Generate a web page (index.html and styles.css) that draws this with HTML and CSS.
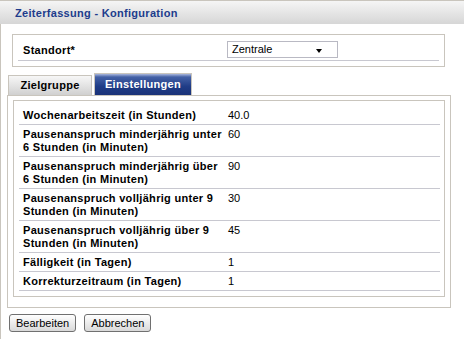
FILE: index.html
```html
<!DOCTYPE html>
<html lang="de">
<head>
  <meta charset="UTF-8" />
  <title>Zeiterfassung - Konfiguration</title>
  <link rel="stylesheet" href="styles.css">
</head>
<body>
  <div class="page">
    <div class="header">
      <h1>Zeiterfassung - Konfiguration</h1>
    </div>
    <div class="content">
      <div class="standort-box">
        <div class="standort-row">
          <label>Standort*</label>
          <div class="select">Zentrale<span class="arrow"></span></div>
        </div>
      </div>

      <div class="tabs">
        <div class="tab">Zielgruppe</div>
        <div class="tab active">Einstellungen</div>
      </div>

      <div class="panel">
        <div class="panel-inner">
          <div class="row">
            <div class="label">Wochenarbeitszeit (in Stunden)</div>
            <div class="value">40.0</div>
          </div>
          <div class="row">
            <div class="label">Pausenanspruch minderjährig unter 6 Stunden (in Minuten)</div>
            <div class="value">60</div>
          </div>
          <div class="row">
            <div class="label">Pausenanspruch minderjährig über 6 Stunden (in Minuten)</div>
            <div class="value">90</div>
          </div>
          <div class="row">
            <div class="label">Pausenanspruch volljährig unter 9 Stunden (in Minuten)</div>
            <div class="value">30</div>
          </div>
          <div class="row">
            <div class="label">Pausenanspruch volljährig über 9 Stunden (in Minuten)</div>
            <div class="value">45</div>
          </div>
          <div class="row">
            <div class="label">Fälligkeit (in Tagen)</div>
            <div class="value">1</div>
          </div>
          <div class="row">
            <div class="label">Korrekturzeitraum (in Tagen)</div>
            <div class="value">1</div>
          </div>
        </div>
      </div>

      <div class="actions">
        <button>Bearbeiten</button>
        <button>Abbrechen</button>
      </div>
    </div>
  </div>
</body>
</html>
```

FILE: styles.css
```css
* {
  box-sizing: border-box;
  font-family: "Liberation Sans", Arial, sans-serif;
}

body {
  margin: 0;
  padding: 0;
  background-color: white;
  font-size: 11px;
  color: black;
}

.page {
  border-top: 1px solid #c9c5bd;
  height: 339px;
  display: flex;
  flex-direction: column;
}

.header {
  height: 23px;
  background: linear-gradient(#f5f5f5, #d6d6d6);
  padding-left: 15px;
  display: flex;
  align-items: center;
}

.header h1 {
  margin: 0;
  font-size: 11px;
  font-weight: bold;
  letter-spacing: 0.3px;
  color: #203c8c;
}

.content {
  flex: 1;
  border-left: 1px solid #c9c5bd;
  padding: 10px 13px 0 6px;
}

/* Standort */
.standort-box {
  margin: 0 6px 0 5px;
  border: 1px solid #c9c5bd;
  padding: 0 5px 5px;
}

.standort-row {
  display: flex;
  align-items: center;
  padding: 6px 0 2px 5px;
  border-bottom: 1px solid #c8c8d0;
}

.standort-row label {
  width: 204px;
  font-weight: bold;
  letter-spacing: 0.3px;
}

.select {
  position: relative;
  width: 111px;
  height: 17px;
  border: 1px solid #b9b9c3;
  padding-left: 4px;
  line-height: 15px;
}

.select .arrow {
  position: absolute;
  right: 15px;
  top: 7px;
  border-top: 4px solid black;
  border-left: 3.5px solid transparent;
  border-right: 3.5px solid transparent;
}

/* Tabs */
.tabs {
  display: flex;
  align-items: flex-end;
  gap: 2px;
  margin: 6px 0 0 1px;
}

.tab {
  height: 20px;
  width: 84px;
  border: 1px solid #c9c5bd;
  border-bottom: none;
  background: linear-gradient(#f7f7f7, #d0d0d0);
  font-weight: bold;
  letter-spacing: 0.3px;
  text-align: center;
  line-height: 19px;
}

.tab.active {
  height: 22px;
  width: 98px;
  background: linear-gradient(#a9b7dd 0, #4461a6 3px, #1f3c86 60%, #1a3278 100%);
  color: white;
  line-height: 21px;
}

/* Settings panel */
.panel {
  border: 1px solid #c9c5bd;
  padding: 4px 5px 10px 5px;
}

.panel-inner {
  border: 1px solid #c9c5bd;
  padding: 5px 4px 5px 5px;
}

.row {
  display: flex;
  border-bottom: 1px solid #c8c8d0;
  padding: 3px 0 2px;
  line-height: 13px;
}

.row .label {
  width: 209px;
  padding: 0 6px 0 4px;
  font-weight: bold;
  letter-spacing: 0.3px;
}

/* Buttons */
.actions {
  display: flex;
  gap: 8px;
  margin: 6px 0 0 2px;
}

.actions button {
  height: 18px;
  padding: 0 6px;
  border: 1px solid #707070;
  border-radius: 3px;
  background: linear-gradient(#ffffff, #d9d9d9);
  font-size: 11px;
  color: black;
  cursor: pointer;
}
```
